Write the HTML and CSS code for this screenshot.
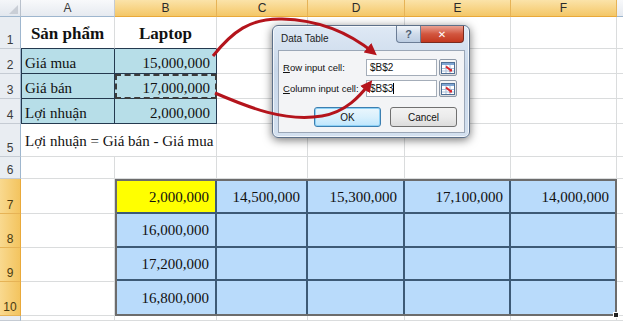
FILE: index.html
```html
<!DOCTYPE html>
<html lang="vi">
<head>
    <meta charset="UTF-8">
    <title>Data Table</title>
    <link rel="stylesheet" href="styles.css">
</head>
<body>
    <div class="sheet">
        <div class="corner"></div>
        <div class="ch">A</div>
        <div class="ch sel">B</div>
        <div class="ch sel">C</div>
        <div class="ch sel">D</div>
        <div class="ch sel">E</div>
        <div class="ch sel">F</div>
        <div class="ch"></div>

        <div class="rh">1</div>
        <div class="c hd edge-b">Sản phẩm</div>
        <div class="c hd edge-b">Laptop</div>
        <div class="c"></div><div class="c"></div><div class="c"></div><div class="c"></div><div class="c"></div>

        <div class="rh">2</div>
        <div class="c blue first bot">Giá mua</div>
        <div class="c blue num bot">15,000,000</div>
        <div class="c"></div><div class="c"></div><div class="c"></div><div class="c"></div><div class="c"></div>

        <div class="rh">3</div>
        <div class="c blue first bot">Giá bán</div>
        <div class="c blue num bot ants">17,000,000</div>
        <div class="c"></div><div class="c"></div><div class="c"></div><div class="c"></div><div class="c"></div>

        <div class="rh">4</div>
        <div class="c blue first bot">Lợi nhuận</div>
        <div class="c blue num bot">2,000,000</div>
        <div class="c"></div><div class="c"></div><div class="c"></div><div class="c"></div><div class="c"></div>

        <div class="rh">5</div>
        <div class="c note">Lợi nhuận = Giá bán - Giá mua</div>
        <div class="c"></div><div class="c"></div><div class="c"></div><div class="c"></div><div class="c"></div>

        <div class="rh">6</div>
        <div class="c"></div><div class="c"></div><div class="c"></div><div class="c"></div><div class="c"></div><div class="c"></div><div class="c"></div>

        <div class="dt">
            <div class="dc num yellow">2,000,000</div>
            <div class="dc num">14,500,000</div>
            <div class="dc num">15,300,000</div>
            <div class="dc num">17,100,000</div>
            <div class="dc num last-col">14,000,000</div>
            <div class="dc num">16,000,000</div>
            <div class="dc"></div><div class="dc"></div><div class="dc"></div><div class="dc last-col"></div>
            <div class="dc num">17,200,000</div>
            <div class="dc"></div><div class="dc"></div><div class="dc"></div><div class="dc last-col"></div>
            <div class="dc num last-row">16,800,000</div>
            <div class="dc last-row"></div><div class="dc last-row"></div><div class="dc last-row"></div><div class="dc last-row last-col"></div>
        </div>

        <div class="rh sel">7</div>
        <div class="c"></div>
        <div class="c"></div>

        <div class="rh sel">8</div>
        <div class="c"></div>
        <div class="c"></div>

        <div class="rh sel">9</div>
        <div class="c"></div>
        <div class="c"></div>

        <div class="rh sel">10</div>
        <div class="c"></div>
        <div class="c"></div>

        <div class="rh"></div>
        <div class="c"></div><div class="c"></div><div class="c"></div><div class="c"></div><div class="c"></div><div class="c"></div><div class="c"></div>
    </div>

    <div class="dialog">
        <div class="dlg-head">
            <span class="dlg-title">Data Table</span>
            <span class="cap help">?</span>
            <span class="cap close">&#x2715;</span>
        </div>
        <div class="dlg-body">
            <div class="field">
                <label><u>R</u>ow input cell:</label>
                <div class="input">$B$2</div>
                <span class="ref">
                    <svg width="14" height="12" viewBox="0 0 14 12">
                        <rect x="0.5" y="0.5" width="13" height="11" fill="#fff" stroke="#4f6f95"/>
                        <rect x="1" y="1" width="12" height="2" fill="#7fa6d3"/>
                        <path d="M1 6.5h12M1 9h12M5 3v8M9 3v8" stroke="#a9bfd9" stroke-width="1"/>
                        <path d="M5 4.5l5 4" stroke="#d8232a" stroke-width="2"/>
                        <path d="M8 9.5h3v-3z" fill="#d8232a"/>
                    </svg>
                </span>
            </div>
            <div class="field">
                <label><u>C</u>olumn input cell:</label>
                <div class="input">$B$3<span class="caret"></span></div>
                <span class="ref">
                    <svg width="14" height="12" viewBox="0 0 14 12">
                        <rect x="0.5" y="0.5" width="13" height="11" fill="#fff" stroke="#4f6f95"/>
                        <rect x="1" y="1" width="12" height="2" fill="#7fa6d3"/>
                        <path d="M1 6.5h12M1 9h12M5 3v8M9 3v8" stroke="#a9bfd9" stroke-width="1"/>
                        <path d="M5 4.5l5 4" stroke="#d8232a" stroke-width="2"/>
                        <path d="M8 9.5h3v-3z" fill="#d8232a"/>
                    </svg>
                </span>
            </div>
            <div class="actions">
                <button class="btn ok">OK</button>
                <button class="btn">Cancel</button>
            </div>
        </div>
    </div>

    <svg class="arrows" width="623" height="321" viewBox="0 0 623 321">
        <defs>
            <marker id="head" viewBox="0 0 10 10" refX="7" refY="5" markerWidth="4" markerHeight="4" orient="auto">
                <path d="M0,0 L10,5 L0,10 z" fill="#b4141c"/>
            </marker>
        </defs>
        <path d="M213,56 C232,32 250,18 282,19 C322,20 352,35 374,53" fill="none" stroke="#b4141c" stroke-width="3" marker-end="url(#head)"/>
        <path d="M215,93 C250,108 285,122 322,116 C346,112 360,96 370,83" fill="none" stroke="#b4141c" stroke-width="3" marker-end="url(#head)"/>
    </svg>
</body>
</html>
```

FILE: styles.css
```css
body {
    margin: 0;
    width: 623px;
    height: 321px;
    overflow: hidden;
    position: relative;
    background: #fff;
}
.sheet {
    display: grid;
    grid-template-columns: 21px 94px 102px 91px 97px 106px 106px 1fr;
    grid-template-rows: 17px 32px 25px 25px 25px 33px 22px 35px 34px 34px 34px 1fr;
    height: 321px;
}
.sheet > div {
    box-sizing: border-box;
}

/* headers */
.corner {
    background: linear-gradient(#f4f6f9, #e2e7ee);
    border-right: 1px solid #b9c1cc;
    border-bottom: 1px solid #9eb6ce;
    position: relative;
}
.corner::after {
    content: "";
    position: absolute;
    right: 2px;
    bottom: 2px;
    border-left: 9px solid transparent;
    border-bottom: 9px solid #c9ced6;
}
.ch {
    display: flex;
    align-items: center;
    justify-content: center;
    background: linear-gradient(#f8f9fb, #e6eaf0);
    border-right: 1px solid #c5cbd3;
    border-bottom: 1px solid #9eb6ce;
    font: 12px "Liberation Sans", Arial, sans-serif;
    color: #3b3b3b;
}
.ch.sel {
    background: linear-gradient(#fbe3a9, #f4c767);
    border-right-color: #e6b356;
    border-bottom-color: #e9a93a;
    color: #2a2a2a;
}
.rh {
    display: flex;
    align-items: flex-end;
    justify-content: center;
    padding-bottom: 1px;
    background: #e9edf2;
    border-right: 1px solid #9eb6ce;
    border-bottom: 1px solid #c5cbd3;
    font: 12px "Liberation Sans", Arial, sans-serif;
    color: #3b3b3b;
}
.rh.sel {
    background: linear-gradient(90deg, #f9d98f, #f3c45f);
    border-right-color: #e9a93a;
    border-bottom-color: #e6b356;
    color: #4a3a10;
}

/* cells */
.c {
    display: flex;
    align-items: center;
    padding: 0 4px;
    border-right: 1px solid #dadcdd;
    border-bottom: 1px solid #dadcdd;
    font: 15px "Liberation Serif", "Times New Roman", serif;
    color: #111;
    white-space: nowrap;
}
.c.hd {
    justify-content: center;
    font-weight: bold;
    font-size: 17px;
    padding-top: 2px;
}
.c.edge-b {
    border-bottom-color: #24394f;
}
.c.blue {
    background: #b7dee8;
    border-right-color: #24394f;
    border-bottom-color: #24394f;
}
.c.first {
    box-shadow: inset 1px 0 #24394f;
}
.c.bot {
    align-items: flex-end;
    padding-bottom: 1px;
}
.num {
    justify-content: flex-end;
}
.c.num {
    padding-right: 6px;
}
.ants {
    outline: 2px dashed #3c3c3c;
    outline-offset: -2px;
}
.c.note {
    grid-column: span 2;
    padding-top: 2px;
}

/* data table block */
.dt {
    grid-column: 3 / 8;
    grid-row: 8 / 12;
    display: grid;
    grid-template-columns: 100px 91px 97px 106px 1fr;
    grid-template-rows: repeat(4, 1fr);
    border: 2px solid #6c6c6c;
    box-shadow: inset 0 0 0 1px #9a9a9a;
    position: relative;
}
.dt::after {
    content: "";
    position: absolute;
    right: -4px;
    bottom: -4px;
    width: 4px;
    height: 4px;
    background: #222;
    border: 1px solid #fff;
}
.dc {
    display: flex;
    align-items: center;
    padding: 2px 6px 0;
    background: #b9dbfb;
    border-right: 2px solid #3d5a76;
    border-bottom: 2px solid #3d5a76;
    font: 15px "Liberation Serif", "Times New Roman", serif;
    color: #111;
}
.dc.yellow {
    background: #ffff00;
}
.dc.last-col {
    border-right: none;
}
.dc.last-row {
    border-bottom: none;
}

/* dialog */
.dialog {
    position: absolute;
    left: 272px;
    top: 25px;
    width: 198px;
    height: 113px;
    box-sizing: border-box;
    padding: 0 4px 4px 5px;
    display: flex;
    flex-direction: column;
    background: linear-gradient(#dfe9f5, #c9d8ea 40%, #d3e0ef);
    border: 1px solid #5d7089;
    border-radius: 6px;
    box-shadow: 0 2px 10px rgba(0, 0, 0, 0.55), inset 0 0 0 1px rgba(255, 255, 255, 0.7);
    font: 10px "Liberation Sans", Arial, sans-serif;
    color: #111;
}
.dlg-head {
    display: flex;
    align-items: flex-start;
    height: 24px;
}
.dlg-title {
    flex: 1;
    padding: 7px 0 0 3px;
    font-size: 10px;
    color: #1b1b1b;
}
.cap {
    display: flex;
    align-items: center;
    justify-content: center;
    height: 17px;
    border: 1px solid #6b7d96;
    border-top: none;
    box-sizing: border-box;
}
.cap.help {
    width: 25px;
    border-radius: 0 0 0 4px;
    background: linear-gradient(#f1f5fa, #cfdbea 50%, #bccde2);
    color: #4d5d73;
    font: bold 11px "Liberation Sans", Arial, sans-serif;
}
.cap.close {
    width: 43px;
    margin-right: 1px;
    border-left: none;
    border-color: #7a2a1e;
    border-radius: 0 0 4px 0;
    background: linear-gradient(#eaa192, #d2563f 50%, #c3381f);
    color: #fff;
    font: bold 10px "DejaVu Sans", sans-serif;
}
.dlg-body {
    flex: 1;
    background: #f3f4f6;
    border: 1px solid #9ba7b7;
    padding: 8px 7px 0 4px;
    display: flex;
    flex-direction: column;
    gap: 4px;
}
.field {
    display: flex;
    align-items: center;
    gap: 2px;
}
.field label {
    flex: 1;
    font-size: 9.5px;
    white-space: nowrap;
}
.input {
    width: 71px;
    height: 17px;
    box-sizing: border-box;
    display: flex;
    align-items: center;
    padding-left: 3px;
    background: #fff;
    border: 1px solid #a4adb9;
}
.caret {
    width: 1px;
    height: 11px;
    background: #000;
}
.ref {
    display: flex;
    align-items: center;
    justify-content: center;
    width: 18px;
    height: 17px;
    box-sizing: border-box;
    border: 1px solid #8c97a6;
    border-radius: 2px;
    background: linear-gradient(#f7f7f7, #dcdcdc);
}
.actions {
    display: flex;
    justify-content: flex-end;
    gap: 9px;
    margin-top: 6px;
}
.btn {
    width: 67px;
    height: 20px;
    padding: 0;
    border: 1px solid #707070;
    border-radius: 3px;
    background: linear-gradient(#f2f2f2, #ebebeb 50%, #dcdcdc);
    font: 10px "Liberation Sans", Arial, sans-serif;
    color: #111;
}
.btn.ok {
    border-color: #3c7fb1;
    box-shadow: inset 0 0 0 1px #8ed1f5;
    background: linear-gradient(#eaf6fd, #d9f0fc 50%, #bee6fd);
}

.arrows {
    position: absolute;
    left: 0;
    top: 0;
    pointer-events: none;
}
```
